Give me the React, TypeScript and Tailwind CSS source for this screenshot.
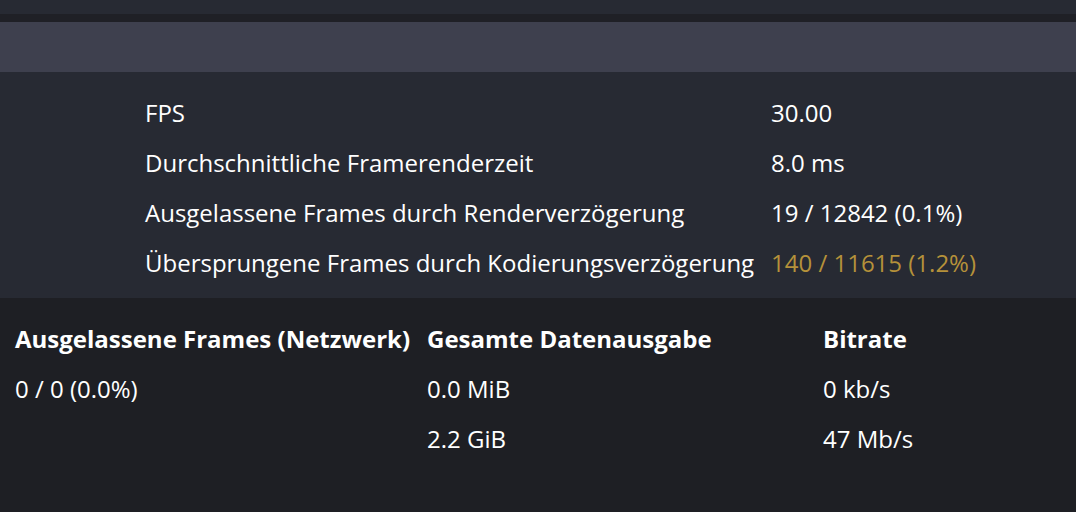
export default function App() {
  const rows: [string, string, boolean][] = [
    ["FPS", "30.00", false],
    ["Durchschnittliche Framerenderzeit", "8.0 ms", false],
    ["Ausgelassene Frames durch Renderverzögerung", "19 / 12842 (0.1%)", false],
    ["Übersprungene Frames durch Kodierungsverzögerung", "140 / 11615 (1.2%)", true],
  ];
  return (
    <div className="w-[1076px] h-[512px] overflow-hidden bg-[#1e1f24] text-white" style={{ fontFamily: '"Open Sans", sans-serif' }}>
      <div className="h-[14px] bg-[#272a33]" />
      <div className="h-[8px] bg-[#1f2026]" />
      <div className="h-[50px] bg-[#3e404e]" />
      <div className="h-[226px] bg-[#272a33] pt-[16px] pl-[145px]">
        <div className="grid grid-cols-[626px_auto]">
          {rows.map(([l, v, warn]) => (
            <div key={l} className="contents">
              <div className="h-[50px] flex items-center text-[24px] whitespace-nowrap">{l}</div>
              <div className={`h-[50px] flex items-center text-[24px] whitespace-nowrap ${warn ? "text-[#b5913a]" : "text-white"}`}>{v}</div>
            </div>
          ))}
        </div>
      </div>
      <div className="pt-[16px] pl-[15px] grid grid-cols-[412px_396px_auto] text-[24px] whitespace-nowrap">
        <div className="h-[50px] flex items-center font-bold">Ausgelassene Frames (Netzwerk)</div>
        <div className="h-[50px] flex items-center font-bold">Gesamte Datenausgabe</div>
        <div className="h-[50px] flex items-center font-bold">Bitrate</div>
        <div className="h-[50px] flex items-center">0 / 0 (0.0%)</div>
        <div className="h-[50px] flex items-center">0.0 MiB</div>
        <div className="h-[50px] flex items-center">0 kb/s</div>
        <div className="h-[50px] flex items-center"></div>
        <div className="h-[50px] flex items-center">2.2 GiB</div>
        <div className="h-[50px] flex items-center">47 Mb/s</div>
      </div>
    </div>
  );
}
